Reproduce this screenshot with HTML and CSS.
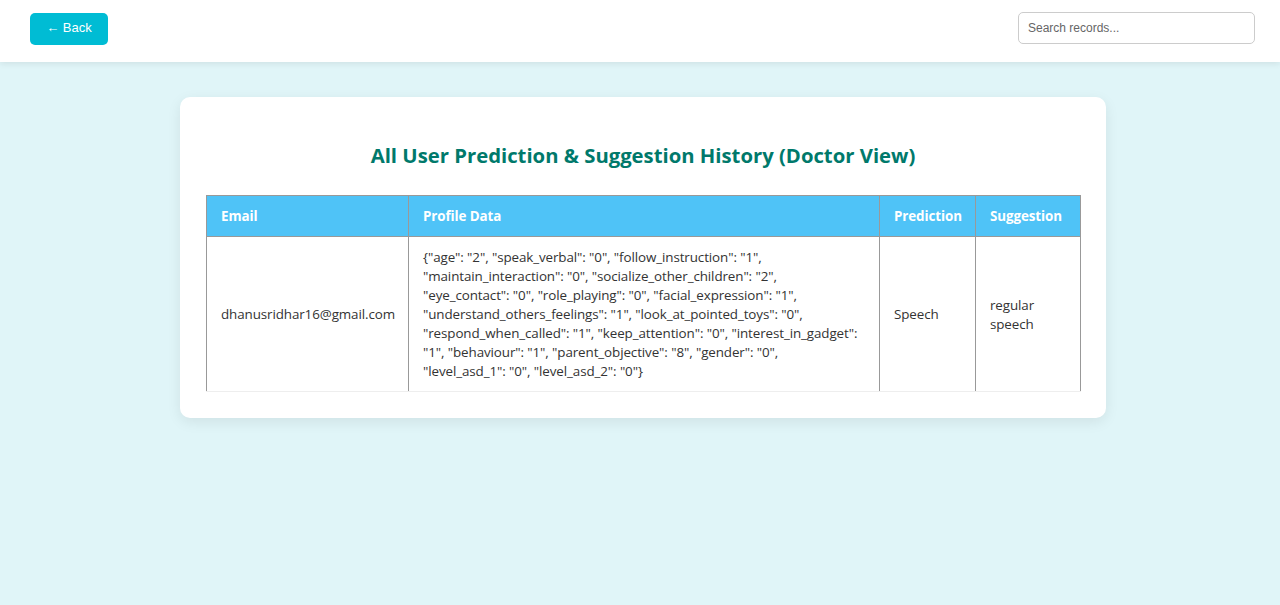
FILE: index.html
```html
<!DOCTYPE html>
<html>
<head>
<meta charset="utf-8">
<link rel="stylesheet" href="styles.css">
</head>
<body>
<header class="topbar">
  <button class="back-btn">← Back</button>
  <input class="search" type="text" placeholder="Search records...">
</header>
<main class="content">
  <section class="card">
    <h2 class="title">All User Prediction &amp; Suggestion History (Doctor View)</h2>
    <table class="history">
      <colgroup>
        <col class="c-email"><col class="c-profile"><col class="c-pred"><col class="c-sugg">
      </colgroup>
      <thead>
        <tr><th>Email</th><th>Profile Data</th><th>Prediction</th><th>Suggestion</th></tr>
      </thead>
      <tbody>
        <tr>
          <td class="email">dhanusridhar16@gmail.com</td>
          <td class="profile">{"age": "2", "speak_verbal": "0", "follow_instruction": "1", "maintain_interaction": "0", "socialize_other_children": "2", "eye_contact": "0", "role_playing": "0", "facial_expression": "1", "understand_others_feelings": "1", "look_at_pointed_toys": "0", "respond_when_called": "1", "keep_attention": "0", "interest_in_gadget": "1", "behaviour": "1", "parent_objective": "8", "gender": "0", "level_asd_1": "0", "level_asd_2": "0"}</td>
          <td>Speech</td>
          <td>regular speech</td>
        </tr>
      </tbody>
    </table>
  </section>
</main>
</body>
</html>
```

FILE: styles.css
```css
html, body {
  margin: 0;
  padding: 0;
}
body {
  background: #e0f5f8;
  font-family: "Open Sans", "Noto Sans", sans-serif;
  min-height: 605px;
}
.topbar {
  height: 62px;
  background: #ffffff;
  box-shadow: 0 2px 6px rgba(0, 0, 0, 0.08);
  display: flex;
  align-items: center;
  justify-content: space-between;
  padding: 0 25px 0 30px;
  box-sizing: border-box;
}
.back-btn {
  width: 78px;
  height: 32px;
  margin-top: -4px;
  background: #00bcd4;
  color: #ffffff;
  border: none;
  border-radius: 5px;
  font-family: "Liberation Sans", Arial, sans-serif;
  font-size: 13px;
  cursor: pointer;
  padding: 0 0 3px;
}
.search {
  width: 237px;
  height: 32px;
  margin-top: -6px;
  box-sizing: border-box;
  border: 1px solid #cccccc;
  border-radius: 5px;
  padding: 0 9px;
  font-family: "Liberation Sans", Arial, sans-serif;
  font-size: 12px;
  color: #333;
  outline: none;
}
.search::placeholder {
  color: #666;
}
.content {
  display: flex;
  justify-content: center;
  padding: 35px 0 0 6px;
}
.card {
  width: 926px;
  box-sizing: border-box;
  background: #ffffff;
  border-radius: 10px;
  box-shadow: 0 4px 14px rgba(0, 0, 0, 0.08);
  padding: 43px 26px 26px;
}
.title {
  margin: 0 0 25px;
  text-align: center;
  color: #00796b;
  font-family: "Open Sans", sans-serif;
  font-size: 20.3px;
  font-weight: 700;
  line-height: 30px;
}
.history {
  width: 874px;
  border-collapse: collapse;
  font-size: 13.4px;
  letter-spacing: -0.1px;
  color: #333;
  table-layout: fixed;
}
.c-email { width: 202px; }
.c-profile { width: 471px; }
.c-pred { width: 96px; }
.c-sugg { width: 105px; }
.history th {
  background: #4fc3f7;
  color: #ffffff;
  font-weight: 700;
  text-align: left;
  height: 41px;
  padding: 0 14px;
  box-sizing: border-box;
  border: 1px solid #999;
}
.history td {
  padding: 11px 14px 10px;
  line-height: 19px;
  vertical-align: middle;
  border-left: 1px solid #999;
  border-right: 1px solid #999;
  border-bottom: 1px solid #eeeeee;
  word-wrap: break-word;
}
.history td.email {
  padding-right: 4px;
}
.history td.profile {
  padding-right: 18px;
}
```
